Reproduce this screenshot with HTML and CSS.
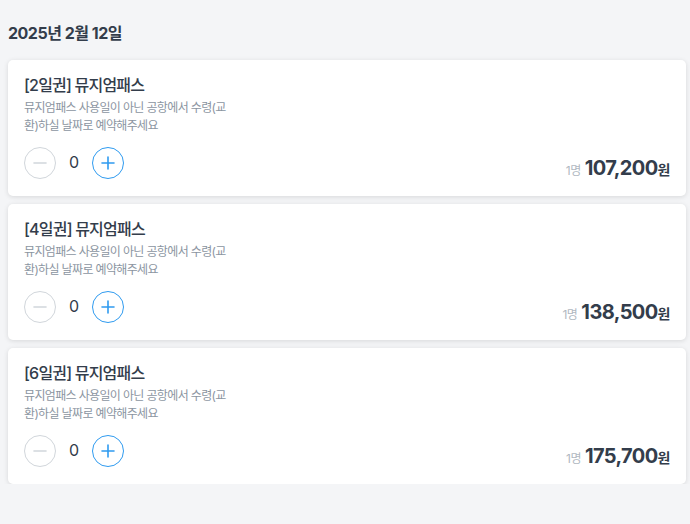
FILE: index.html
```html
<!DOCTYPE html>
<html lang="ko">
<head>
<meta charset="utf-8">
<link rel="stylesheet" href="styles.css">
</head>
<body>
<div class="page">
  <h2 class="date">2025년 2월 12일</h2>
  <div class="list">
    <div class="card">
      <div class="name">[2일권] 뮤지엄패스</div>
      <p class="desc">뮤지엄패스 사용일이 아닌 공항에서 수령(교환)하실 날짜로 예약해주세요</p>
      <div class="row">
        <div class="counter">
          <button class="btn minus"><svg viewBox="0 0 16 16" width="16" height="16"><path d="M2 8h12" stroke="currentColor" stroke-width="1.6" stroke-linecap="round"/></svg></button>
          <span class="count">0</span>
          <button class="btn plus"><svg viewBox="0 0 16 16" width="16" height="16"><path d="M2 8h12M8 2v12" stroke="currentColor" stroke-width="1.6" stroke-linecap="round"/></svg></button>
        </div>
        <div class="price"><span class="per">1명</span><span class="amount">107,200</span><span class="won">원</span></div>
      </div>
    </div>
    <div class="card">
      <div class="name">[4일권] 뮤지엄패스</div>
      <p class="desc">뮤지엄패스 사용일이 아닌 공항에서 수령(교환)하실 날짜로 예약해주세요</p>
      <div class="row">
        <div class="counter">
          <button class="btn minus"><svg viewBox="0 0 16 16" width="16" height="16"><path d="M2 8h12" stroke="currentColor" stroke-width="1.6" stroke-linecap="round"/></svg></button>
          <span class="count">0</span>
          <button class="btn plus"><svg viewBox="0 0 16 16" width="16" height="16"><path d="M2 8h12M8 2v12" stroke="currentColor" stroke-width="1.6" stroke-linecap="round"/></svg></button>
        </div>
        <div class="price"><span class="per">1명</span><span class="amount">138,500</span><span class="won">원</span></div>
      </div>
    </div>
    <div class="card">
      <div class="name">[6일권] 뮤지엄패스</div>
      <p class="desc">뮤지엄패스 사용일이 아닌 공항에서 수령(교환)하실 날짜로 예약해주세요</p>
      <div class="row">
        <div class="counter">
          <button class="btn minus"><svg viewBox="0 0 16 16" width="16" height="16"><path d="M2 8h12" stroke="currentColor" stroke-width="1.6" stroke-linecap="round"/></svg></button>
          <span class="count">0</span>
          <button class="btn plus"><svg viewBox="0 0 16 16" width="16" height="16"><path d="M2 8h12M8 2v12" stroke="currentColor" stroke-width="1.6" stroke-linecap="round"/></svg></button>
        </div>
        <div class="price"><span class="per">1명</span><span class="amount">175,700</span><span class="won">원</span></div>
      </div>
    </div>
  </div>
</div>
</body>
</html>
```
FILE: styles.css
```css
* { box-sizing: border-box; }
html, body {
  margin: 0;
  padding: 0;
  background: #f4f5f7;
  font-family: Inter, "Noto Sans CJK KR", sans-serif;
  color: #333d4b;
}
.page {
  padding: 22px 4px 0 8px;
}
.date {
  margin: 0 0 16px 0;
  font-size: 16px;
  line-height: 22px;
  font-weight: 700;
  color: #333d4b;
  letter-spacing: -0.5px;
}
.list {
  display: flex;
  flex-direction: column;
  gap: 8px;
}
.card {
  background: #fff;
  border-radius: 5px;
  box-shadow: 0 1px 5px rgba(0, 0, 0, 0.12);
  padding: 15px 16px 17px 16px;
  height: 136px;
}
.name {
  font-size: 16px;
  line-height: 20px;
  font-weight: 500;
  color: #333d4b;
  letter-spacing: -0.8px;
}
.desc {
  margin: 4px 0 0 0;
  width: 205px;
  font-size: 12px;
  line-height: 18px;
  color: #8b95a1;
  word-break: break-all;
  letter-spacing: -0.65px;
}
.row {
  margin-top: 12px;
  display: flex;
  justify-content: space-between;
  align-items: flex-end;
}
.counter {
  display: flex;
  align-items: center;
}
.btn {
  width: 32px;
  height: 32px;
  border-radius: 50%;
  background: #fff;
  padding: 0;
  display: flex;
  align-items: center;
  justify-content: center;
}
.minus {
  border: 1px solid #d1d6db;
  color: #d1d6db;
}
.plus {
  border: 1px solid #2f9bf0;
  color: #2f9bf0;
}
.count {
  width: 36px;
  text-align: center;
  font-size: 16px;
  color: #333d4b;
  margin-top: -2px;
}
.price {
  display: flex;
  align-items: baseline;
  margin-bottom: -1px;
}
.per {
  font-size: 12px;
  color: #b0b8c1;
  margin-right: 4px;
  letter-spacing: -0.5px;
}
.amount {
  font-size: 20px;
  font-weight: 700;
  color: #333d4b;
  letter-spacing: -0.6px;
}
.won {
  font-size: 14px;
  font-weight: 700;
  color: #333d4b;
  letter-spacing: -0.5px;
}
```
